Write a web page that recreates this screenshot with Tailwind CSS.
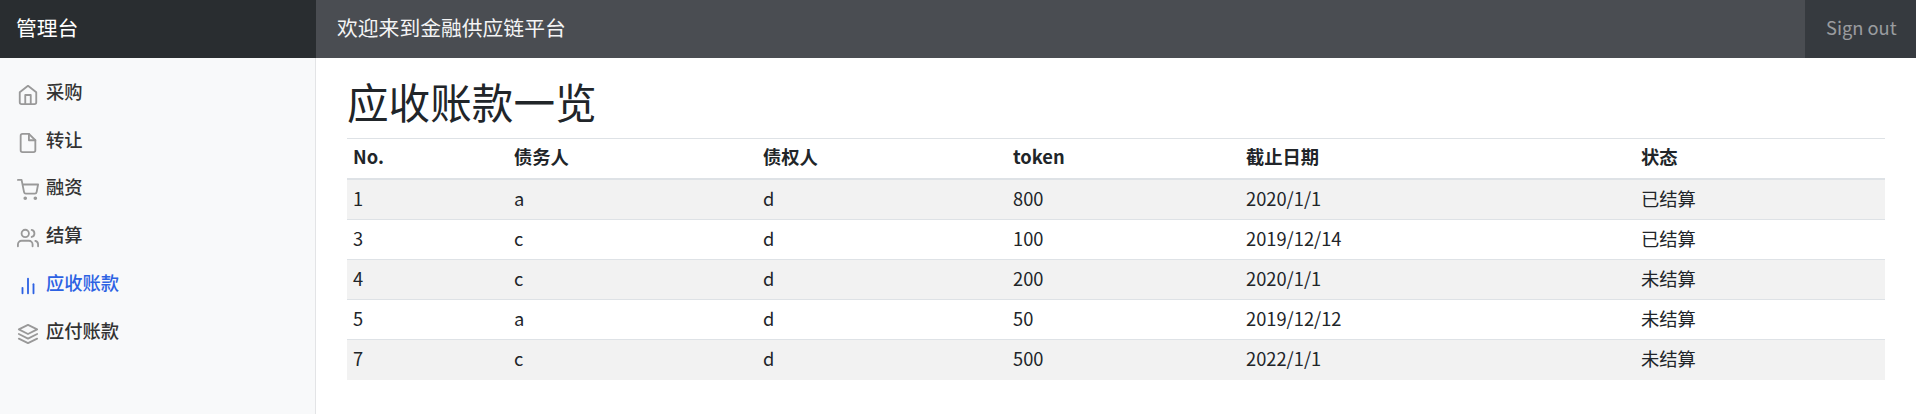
<!DOCTYPE html>
<html lang="zh">
  <head>
    <meta charset="UTF-8" />
    <title>应收账款一览</title>
    <script src="https://cdn.jsdelivr.net/npm/@tailwindcss/browser@4"></script>
  </head>
  <body class="h-[414px] overflow-hidden bg-white font-['Noto_Sans_CJK_SC','Noto_Sans',sans-serif] text-[18.3px] text-[#212529]">
    <header class="flex h-[58px] bg-[#4a4d52] text-white">
      <div class="w-[316px] shrink-0 bg-[#292d30] pl-4 text-[20.8px] leading-[55px]">管理台</div>
      <div class="flex-1 pl-[21px] text-[20.8px] leading-[55px] text-[#f4f4f5]">欢迎来到金融供应链平台</div>
      <a class="w-[111px] bg-[#363a3f] pl-[21px] leading-[55px] text-white/50">Sign out</a>
    </header>
    <div class="flex h-[356px]">
      <nav class="w-[316px] shrink-0 border-r border-[#e3e4e6] bg-[#f8f9fa] pt-[10px] pl-4 font-medium text-[#333]">
        <ul class="flex flex-col">
          <li class="flex h-[48px] items-center gap-[7px]">
            <svg class="mt-[6px] ml-[1px] h-[22px] w-[22px] text-[#999]" viewBox="0 0 24 24" fill="none" stroke="currentColor" stroke-width="2" stroke-linecap="round" stroke-linejoin="round"><path d="M3 9l9-7 9 7v11a2 2 0 0 1-2 2H5a2 2 0 0 1-2-2z"/><polyline points="9 22 9 12 15 12 15 22"/></svg>
            采购
          </li>
          <li class="flex h-[47px] items-center gap-[7px]">
            <svg class="mt-[6px] ml-[1px] h-[22px] w-[22px] text-[#999]" viewBox="0 0 24 24" fill="none" stroke="currentColor" stroke-width="2" stroke-linecap="round" stroke-linejoin="round"><path d="M13 2H6a2 2 0 0 0-2 2v16a2 2 0 0 0 2 2h12a2 2 0 0 0 2-2V9z"/><polyline points="13 2 13 9 20 9"/></svg>
            转让
          </li>
          <li class="flex h-[48px] items-center gap-[7px]">
            <svg class="mt-[6px] ml-[1px] h-[22px] w-[22px] text-[#999]" viewBox="0 0 24 24" fill="none" stroke="currentColor" stroke-width="2" stroke-linecap="round" stroke-linejoin="round"><circle cx="9" cy="21" r="1"/><circle cx="20" cy="21" r="1"/><path d="M1 1h4l2.68 13.39a2 2 0 0 0 2 1.61h9.72a2 2 0 0 0 2-1.61L23 6H6"/></svg>
            融资
          </li>
          <li class="flex h-[48px] items-center gap-[7px]">
            <svg class="mt-[6px] ml-[1px] h-[22px] w-[22px] text-[#999]" viewBox="0 0 24 24" fill="none" stroke="currentColor" stroke-width="2" stroke-linecap="round" stroke-linejoin="round"><path d="M17 21v-2a4 4 0 0 0-4-4H5a4 4 0 0 0-4 4v2"/><circle cx="9" cy="7" r="4"/><path d="M23 21v-2a4 4 0 0 0-3-3.87"/><path d="M16 3.13a4 4 0 0 1 0 7.75"/></svg>
            结算
          </li>
          <li class="flex h-[48px] items-center gap-[7px] text-[#2d62e3]">
            <svg class="mt-[6px] ml-[1px] h-[22px] w-[22px]" viewBox="0 0 24 24" fill="none" stroke="currentColor" stroke-width="2" stroke-linecap="round" stroke-linejoin="round"><line x1="18" y1="20" x2="18" y2="10"/><line x1="12" y1="20" x2="12" y2="4"/><line x1="6" y1="20" x2="6" y2="14"/></svg>
            应收账款
          </li>
          <li class="flex h-[48px] items-center gap-[7px]">
            <svg class="mt-[6px] ml-[1px] h-[22px] w-[22px] text-[#999]" viewBox="0 0 24 24" fill="none" stroke="currentColor" stroke-width="2" stroke-linecap="round" stroke-linejoin="round"><polygon points="12 2 2 7 12 12 22 7 12 2"/><polyline points="2 17 12 22 22 17"/><polyline points="2 12 12 17 22 12"/></svg>
            应付账款
          </li>
        </ul>
      </nav>
      <main class="flex-1 pr-[31px] pl-[31px]">
        <h2 class="h-[80px] pt-[15px] text-[41.6px] leading-[56px]">应收账款一览</h2>
        <table class="w-full table-fixed border-t border-[#dee2e6]">
          <colgroup>
            <col class="w-[161px]" /><col class="w-[249px]" /><col class="w-[250px]" /><col class="w-[233px]" /><col class="w-[395px]" /><col />
          </colgroup>
          <thead>
            <tr class="h-[40px] border-b-2 border-[#dee2e6] text-left">
              <th class="px-[6px] pb-[3px] font-bold">No.</th><th class="px-[6px] pb-[3px] font-bold">债务人</th><th class="px-[6px] pb-[3px] font-bold">债权人</th><th class="px-[6px] pb-[3px] font-bold">token</th><th class="px-[6px] pb-[3px] font-bold">截止日期</th><th class="px-[6px] pb-[3px] font-bold">状态</th>
            </tr>
          </thead>
          <tbody>
            <tr class="h-[41px] border-b border-[#dee2e6] bg-[#f2f2f2]">
              <td class="px-[6px] pb-[2px]">1</td><td class="px-[6px] pb-[2px]">a</td><td class="px-[6px] pb-[2px]">d</td><td class="px-[6px] pb-[2px]">800</td><td class="px-[6px] pb-[2px]">2020/1/1</td><td class="px-[6px] pb-[2px]">已结算</td>
            </tr>
            <tr class="h-[40px] border-b border-[#dee2e6]">
              <td class="px-[6px] pb-[2px]">3</td><td class="px-[6px] pb-[2px]">c</td><td class="px-[6px] pb-[2px]">d</td><td class="px-[6px] pb-[2px]">100</td><td class="px-[6px] pb-[2px]">2019/12/14</td><td class="px-[6px] pb-[2px]">已结算</td>
            </tr>
            <tr class="h-[40px] border-b border-[#dee2e6] bg-[#f2f2f2]">
              <td class="px-[6px] pb-[2px]">4</td><td class="px-[6px] pb-[2px]">c</td><td class="px-[6px] pb-[2px]">d</td><td class="px-[6px] pb-[2px]">200</td><td class="px-[6px] pb-[2px]">2020/1/1</td><td class="px-[6px] pb-[2px]">未结算</td>
            </tr>
            <tr class="h-[40px] border-b border-[#dee2e6]">
              <td class="px-[6px] pb-[2px]">5</td><td class="px-[6px] pb-[2px]">a</td><td class="px-[6px] pb-[2px]">d</td><td class="px-[6px] pb-[2px]">50</td><td class="px-[6px] pb-[2px]">2019/12/12</td><td class="px-[6px] pb-[2px]">未结算</td>
            </tr>
            <tr class="h-[40px] bg-[#f2f2f2]">
              <td class="px-[6px] pb-[2px]">7</td><td class="px-[6px] pb-[2px]">c</td><td class="px-[6px] pb-[2px]">d</td><td class="px-[6px] pb-[2px]">500</td><td class="px-[6px] pb-[2px]">2022/1/1</td><td class="px-[6px] pb-[2px]">未结算</td>
            </tr>
          </tbody>
        </table>
      </main>
    </div>
  </body>
</html>
